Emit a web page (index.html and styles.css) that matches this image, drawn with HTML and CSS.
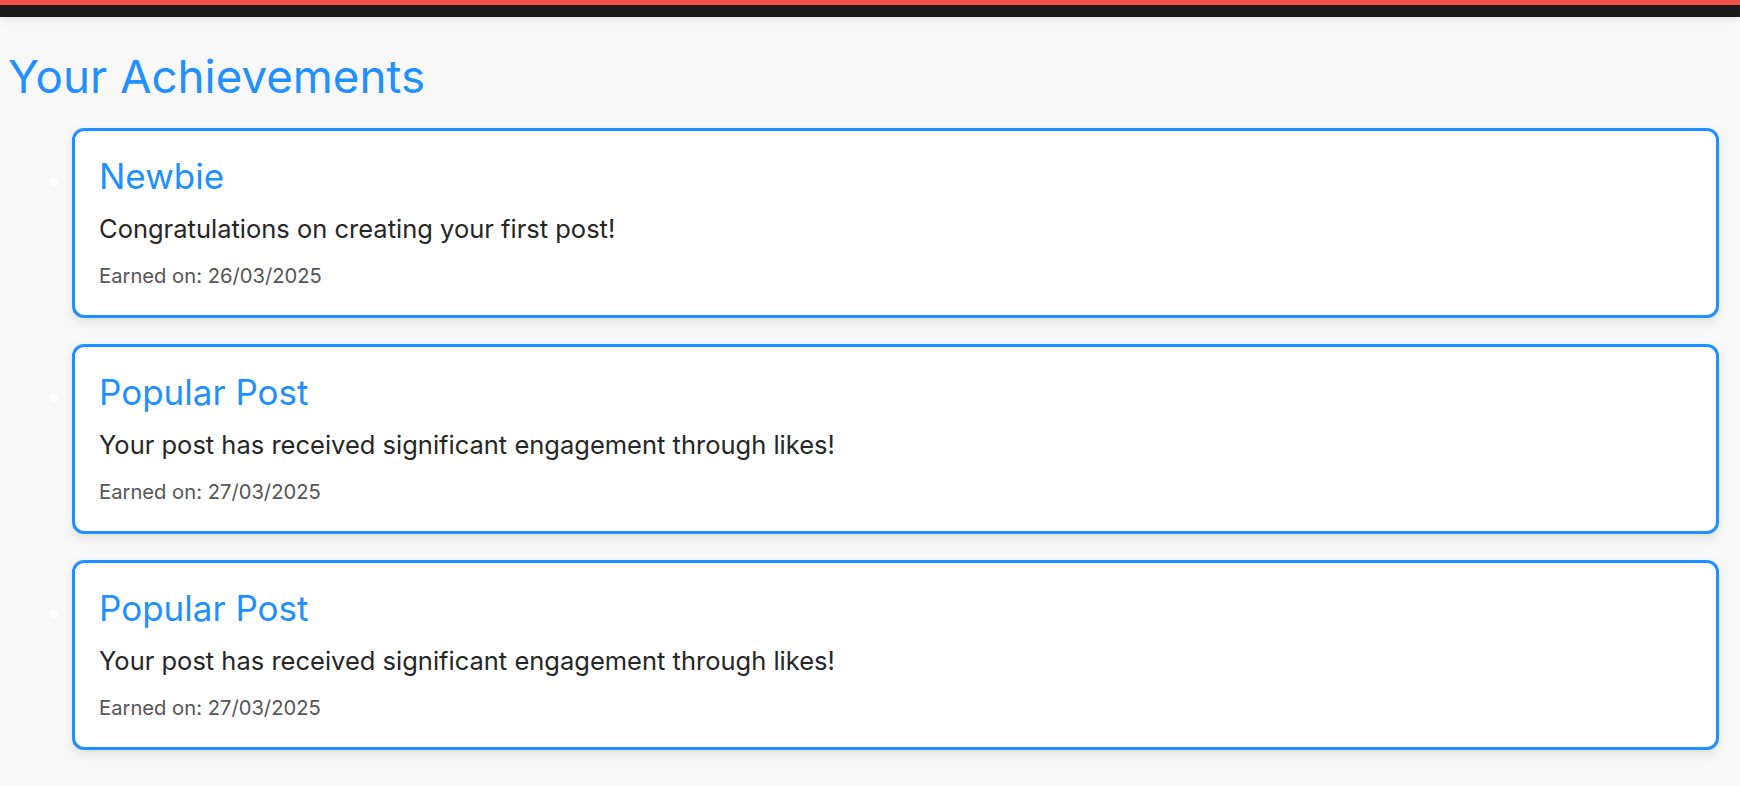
FILE: index.html
```html
<!DOCTYPE html>
<html lang="en">
<head>
<meta charset="utf-8">
<title>Your Achievements</title>
<link rel="stylesheet" href="styles.css">
</head>
<body>
<header class="topbar"></header>
<main class="page">
  <h1 class="page-title">Your Achievements</h1>
  <ul class="achievements">
    <li class="card">
      <h2 class="card-title">Newbie</h2>
      <p class="card-desc">Congratulations on creating your first post!</p>
      <p class="card-date">Earned on: 26/03/2025</p>
    </li>
    <li class="card">
      <h2 class="card-title">Popular Post</h2>
      <p class="card-desc">Your post has received significant engagement through likes!</p>
      <p class="card-date">Earned on: 27/03/2025</p>
    </li>
    <li class="card">
      <h2 class="card-title">Popular Post</h2>
      <p class="card-desc">Your post has received significant engagement through likes!</p>
      <p class="card-date">Earned on: 27/03/2025</p>
    </li>
  </ul>
</main>
</body>
</html>
```
FILE: styles.css
```css
html, body {
  margin: 0;
  padding: 0;
}

body {
  background: #f8f8f8;
  font-family: Inter, "Open Sans", sans-serif;
  color: #222;
  overflow: hidden;
}

.topbar {
  height: 12px;
  border-top: 5px solid #f55247;
  background: #1b1b1b;
  box-shadow: 0 2px 8px rgba(0, 0, 0, 0.08);
}

.page {
  padding: 0 8px;
}

.page-title {
  margin: 31px 0 0;
  font-size: 45.7px;
  line-height: 58px;
  font-weight: 400;
  color: #1e90ff;
}

.achievements {
  margin: 22px 0 0;
  padding: 0 13px 0 64px;
}

.card {
  font-size: 24px;
  background: #fff;
  border: 3px solid #1e90ff;
  border-radius: 12px;
  padding: 23px 24px 24px;
  margin-bottom: 26px;
  box-shadow: 0 4px 10px rgba(0, 0, 0, 0.1);
}

.card::marker {
  color: #fff;
}

.card-title {
  margin: 0;
  font-size: 35px;
  line-height: 44px;
  font-weight: 400;
  color: #1e90ff;
}

.card-desc {
  margin: 13px 0 0;
  font-size: 25.5px;
  line-height: 36px;
  color: #262626;
}

.card-date {
  margin: 14px 0 0;
  font-size: 20.2px;
  line-height: 30px;
  color: #555;
}
```
